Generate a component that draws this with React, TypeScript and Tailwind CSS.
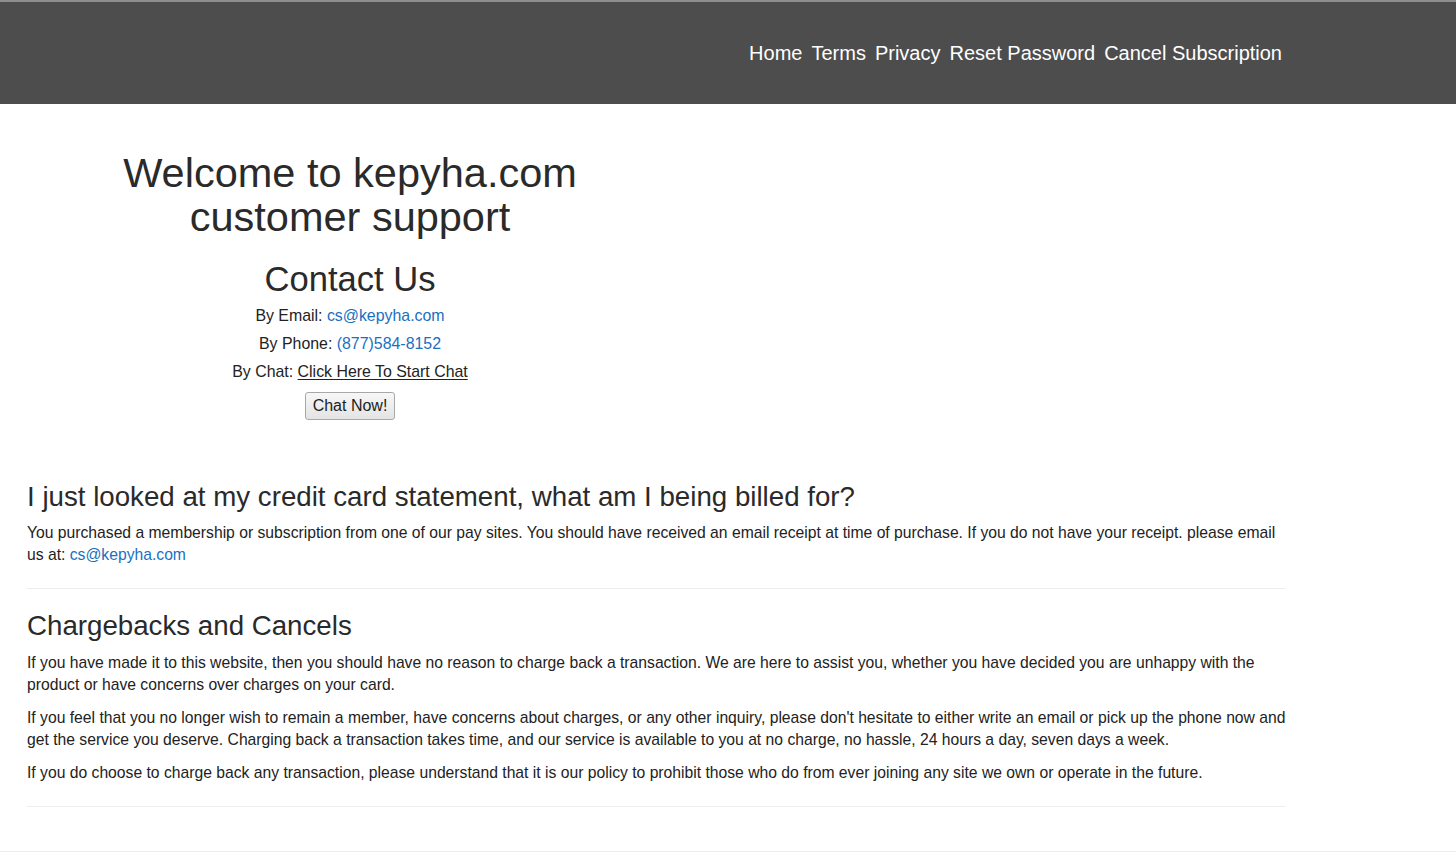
const navLinks = ["Home", "Terms", "Privacy", "Reset Password", "Cancel Subscription"];

export default function App() {
  return (
    <div className="min-h-screen bg-white font-['Liberation_Sans',Arial,sans-serif] text-[#222]">
      {/* top bar */}
      <header className="border-t-2 border-[#8e8e8e] bg-[#4d4d4d]">
        <div className="ml-[27px] flex h-[102px] w-[1259px] items-center justify-end pr-[4px]">
          <nav className="flex items-center gap-[9px] text-[20px] leading-none text-white">
            {navLinks.map((l) => (
              <a key={l} href="#">
                {l}
              </a>
            ))}
          </nav>
        </div>
      </header>

      <main className="ml-[27px] w-[1259px]">
        {/* contact block */}
        <section className="flex w-[646px] flex-col items-center text-center">
          <h1 className="mt-[47px] text-[41.5px] leading-[44px] font-normal text-[#2a2a2a]">
            Welcome to kepyha.com
            <br />
            customer support
          </h1>
          <h2 className="mt-[20px] text-[34.6px] leading-[40px] text-[#2a2a2a]">Contact Us</h2>
          <div className="mt-[3px] text-[15.9px] leading-[28px] text-[#222]">
            <p>
              By Email: <a href="#" className="text-[#1a6fc0]">cs@kepyha.com</a>
            </p>
            <p>
              By Phone: <a href="#" className="text-[#1a6fc0]">(877)584-8152</a>
            </p>
            <p>
              By Chat:{" "}
              <a href="#" className="underline underline-offset-2">
                Click Here To Start Chat
              </a>
            </p>
          </div>
          <button className="mt-[6px] h-[28px] w-[90px] rounded-[3px] border border-[#a8a8a8] bg-gradient-to-b from-[#f7f7f7] to-[#e4e4e4] text-[16px] text-[#222]">
            Chat Now!
          </button>
        </section>

        {/* billing */}
        <section>
          <h2 className="mt-[60px] text-[27.7px] leading-[34px] text-[#2a2a2a]">
            I just looked at my credit card statement, what am I being billed for?
          </h2>
          <p className="mt-[8px] text-[15.7px] leading-[22px]">
            You purchased a membership or subscription from one of our pay sites. You should have received an email
            receipt at time of purchase. If you do not have your receipt. please email us at:{" "}
            <a href="#" className="text-[#1a6fc0]">
              cs@kepyha.com
            </a>
          </p>
          <hr className="mt-[22px] border-t border-[#eeeeee]" />
        </section>

        {/* chargebacks */}
        <section>
          <h2 className="mt-[20px] text-[27.7px] leading-[34px] text-[#2a2a2a]">Chargebacks and Cancels</h2>
          <p className="mt-[9px] text-[15.7px] leading-[22px]">
            If you have made it to this website, then you should have no reason to charge back a transaction. We are here
            to assist you, whether you have decided you are unhappy with the product or have concerns over charges on your
            card.
          </p>
          <p className="mt-[11px] text-[15.7px] leading-[22px]">
            If you feel that you no longer wish to remain a member, have concerns about charges, or any other inquiry,
            please don't hesitate to either write an email or pick up the phone now and get the service you deserve.
            Charging back a transaction takes time, and our service is available to you at no charge, no hassle, 24 hours
            a day, seven days a week.
          </p>
          <p className="mt-[11px] text-[15.7px] leading-[22px]">
            If you do choose to charge back any transaction, please understand that it is our policy to prohibit those who
            do from ever joining any site we own or operate in the future.
          </p>
          <hr className="mt-[22px] border-t border-[#eeeeee]" />
        </section>
      </main>

      <footer className="mt-[44px] border-t border-[#eeeeee]" />
    </div>
  );
}
